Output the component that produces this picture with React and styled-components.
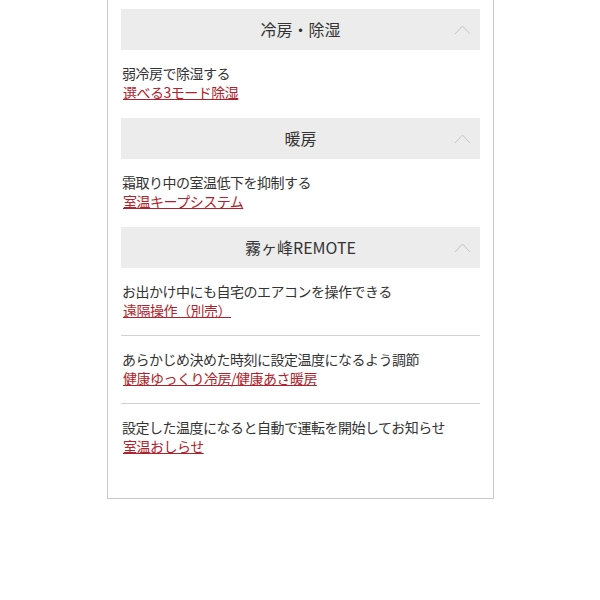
import React from "react";
import styled, { createGlobalStyle } from "styled-components";

const GlobalStyle = createGlobalStyle`
  body {
    margin: 0;
    background: #fff;
    font-family: "Noto Sans CJK JP", "Noto Sans", sans-serif;
    color: #333;
  }
`;

const sections = [
  {
    title: "冷房・除湿",
    items: [{ text: "弱冷房で除湿する", link: "選べる3モード除湿" }],
  },
  {
    title: "暖房",
    items: [{ text: "霜取り中の室温低下を抑制する", link: "室温キープシステム" }],
  },
  {
    title: "霧ヶ峰REMOTE",
    items: [
      { text: "お出かけ中にも自宅のエアコンを操作できる", link: "遠隔操作（別売）" },
      { text: "あらかじめ決めた時刻に設定温度になるよう調節", link: "健康ゆっくり冷房/健康あさ暖房" },
      { text: "設定した温度になると自動で運転を開始してお知らせ", link: "室温おしらせ" },
    ],
  },
];

const Chevron = () => (
  <svg width="17" height="11" viewBox="0 0 17 11" fill="none">
    <path d="M1 10 L8.5 2 L16 10" stroke="#c4c4c4" strokeWidth="1" />
  </svg>
);

const App = () => (
  <>
    <GlobalStyle />
    <Panel>
      {sections.map((s) => (
        <Section key={s.title}>
          <Header>
            <Title>{s.title}</Title>
            <Toggle>
              <Chevron />
            </Toggle>
          </Header>
          {s.items.map((it, i) => (
            <Item key={it.link} $divided={i > 0}>
              <Desc>{it.text}</Desc>
              <Link href="#">{it.link}</Link>
            </Item>
          ))}
        </Section>
      ))}
    </Panel>
  </>
);

export default App;

const Panel = styled.div`
  width: 359px;
  margin-left: 107px;
  padding: 9px 13px 26px;
  border: 1px solid #c8c8c8;
  border-top: none;
`;

const Section = styled.section`
  display: flex;
  flex-direction: column;
`;

const Header = styled.div`
  position: relative;
  height: 41px;
  background: #ececec;
  display: flex;
  align-items: center;
  justify-content: center;
`;

const Title = styled.h2`
  margin: 0 0 1px;
  font-size: 16px;
  line-height: 1;
  font-weight: normal;
  color: #333;
`;

const Toggle = styled.span`
  position: absolute;
  right: 9px;
  top: 15px;
  display: flex;
`;

const Item = styled.div`
  display: flex;
  flex-direction: column;
  align-items: flex-start;
  padding: 14px 0 16px 1px;
  border-top: ${(p) => (p.$divided ? "1px solid #d2d2d2" : "none")};
  margin-top: ${(p) => (p.$divided ? "-1px" : "0")};
`;

const Desc = styled.p`
  margin: 0;
  font-size: 14px;
  line-height: 19px;
  letter-spacing: -0.5px;
`;

const Link = styled.a`
  font-size: 14px;
  line-height: 19px;
  letter-spacing: -0.5px;
  color: #b0222b;
  text-decoration: underline;
  margin-left: 1px;
`;
